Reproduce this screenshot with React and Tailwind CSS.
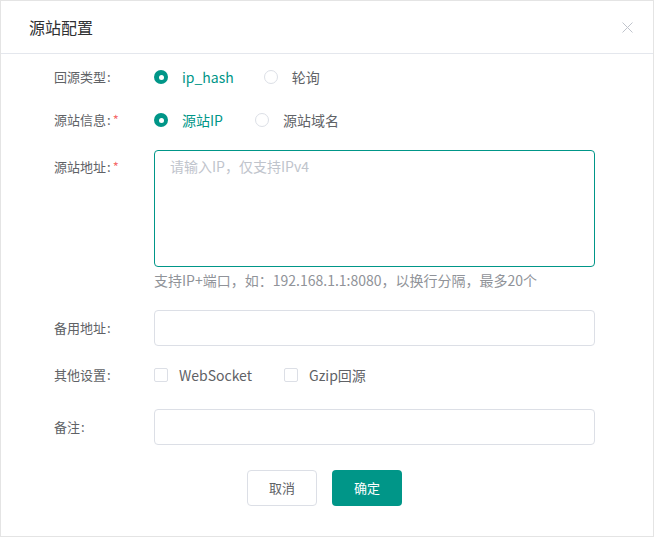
import React, { useState } from 'react';

const font = { fontFamily: '"Noto Sans CJK SC", "Noto Sans", sans-serif' };

function Label({ text, required }) {
  return (
    <div className="w-[100px] shrink-0 text-[13px] text-[#606266]">
      {text}
      <span className="ml-[1px]">:</span>
      {required && <span className="ml-[2px] text-[#f56c6c]">*</span>}
    </div>
  );
}

function Radio({ checked, label, onClick }) {
  return (
    <label className="flex items-center cursor-pointer" onClick={onClick}>
      {checked ? (
        <span className="w-[14px] h-[14px] rounded-full bg-[#009688] flex items-center justify-center">
          <span className="w-[5px] h-[5px] rounded-full bg-white" />
        </span>
      ) : (
        <span className="w-[14px] h-[14px] rounded-full border border-[#dcdfe6] bg-white" />
      )}
      <span className={`ml-[14px] text-[14px] ${checked ? 'text-[#009688]' : 'text-[#606266]'}`}>{label}</span>
    </label>
  );
}

function Checkbox({ label }) {
  return (
    <label className="flex items-center cursor-pointer">
      <span className="w-[14px] h-[14px] rounded-[2px] border border-[#dcdfe6] bg-white" />
      <span className="ml-[11px] text-[14px] text-[#606266]">{label}</span>
    </label>
  );
}

export default function App() {
  const [mode, setMode] = useState('ip_hash');
  const [kind, setKind] = useState('ip');

  return (
    <div style={font} className="w-[654px] h-[537px] bg-white border border-[#e4e4e4] flex flex-col">
      <div className="h-[53px] shrink-0 border-b border-[#e4e7ed] flex items-center justify-between pl-[28px] pr-[20px]">
        <span className="text-[16px] text-[#303133]">源站配置</span>
        <svg width="11" height="11" viewBox="0 0 11 11" className="text-[#c0c4cc]">
          <path d="M0.5 0.5 L10.5 10.5 M10.5 0.5 L0.5 10.5" stroke="currentColor" strokeWidth="1" />
        </svg>
      </div>

      <div className="pl-[53px] pr-[58px]">
        <div className="flex items-center h-[36px] mt-[5px]">
          <Label text="回源类型" />
          <div className="flex items-center gap-[30px]">
            <Radio checked={mode === 'ip_hash'} label="ip_hash" onClick={() => setMode('ip_hash')} />
            <Radio checked={mode === 'rr'} label="轮询" onClick={() => setMode('rr')} />
          </div>
        </div>

        <div className="flex items-center h-[36px] mt-[7px]">
          <Label text="源站信息" required />
          <div className="flex items-center gap-[32px]">
            <Radio checked={kind === 'ip'} label="源站IP" onClick={() => setKind('ip')} />
            <Radio checked={kind === 'domain'} label="源站域名" onClick={() => setKind('domain')} />
          </div>
        </div>

        <div className="flex mt-[12px]">
          <div className="pt-[7px]">
            <Label text="源站地址" required />
          </div>
          <div className="flex-1">
            <textarea
              className="block w-full h-[117px] rounded-[4px] border border-[#009688] px-[15px] py-[5px] text-[14px] text-[#606266] placeholder-[#c0c4cc] outline-none resize-none"
              placeholder="请输入IP，仅支持IPv4"
            />
            <div className="mt-[3px] text-[14px] leading-[20px] text-[#909399]">
              支持IP+端口，如：192.168.1.1:8080，以换行分隔，最多20个
            </div>
          </div>
        </div>

        <div className="flex items-center mt-[20px]">
          <Label text="备用地址" />
          <input className="flex-1 h-[36px] rounded-[4px] border border-[#dcdfe6] px-[15px] text-[14px] outline-none" />
        </div>

        <div className="flex items-center h-[36px] mt-[11px]">
          <Label text="其他设置" />
          <div className="flex items-center gap-[32px]">
            <Checkbox label="WebSocket" />
            <Checkbox label="Gzip回源" />
          </div>
        </div>

        <div className="flex items-center mt-[16px]">
          <Label text="备注" />
          <input className="flex-1 h-[36px] rounded-[4px] border border-[#dcdfe6] px-[15px] text-[14px] outline-none" />
        </div>

        <div className="flex justify-center gap-[15px] mt-[25px]">
          <button className="w-[70px] h-[36px] rounded-[4px] border border-[#dcdfe6] bg-white text-[13px] text-[#606266]">取消</button>
          <button className="w-[70px] h-[36px] rounded-[4px] bg-[#009688] text-[13px] text-white">确定</button>
        </div>
      </div>
    </div>
  );
}
